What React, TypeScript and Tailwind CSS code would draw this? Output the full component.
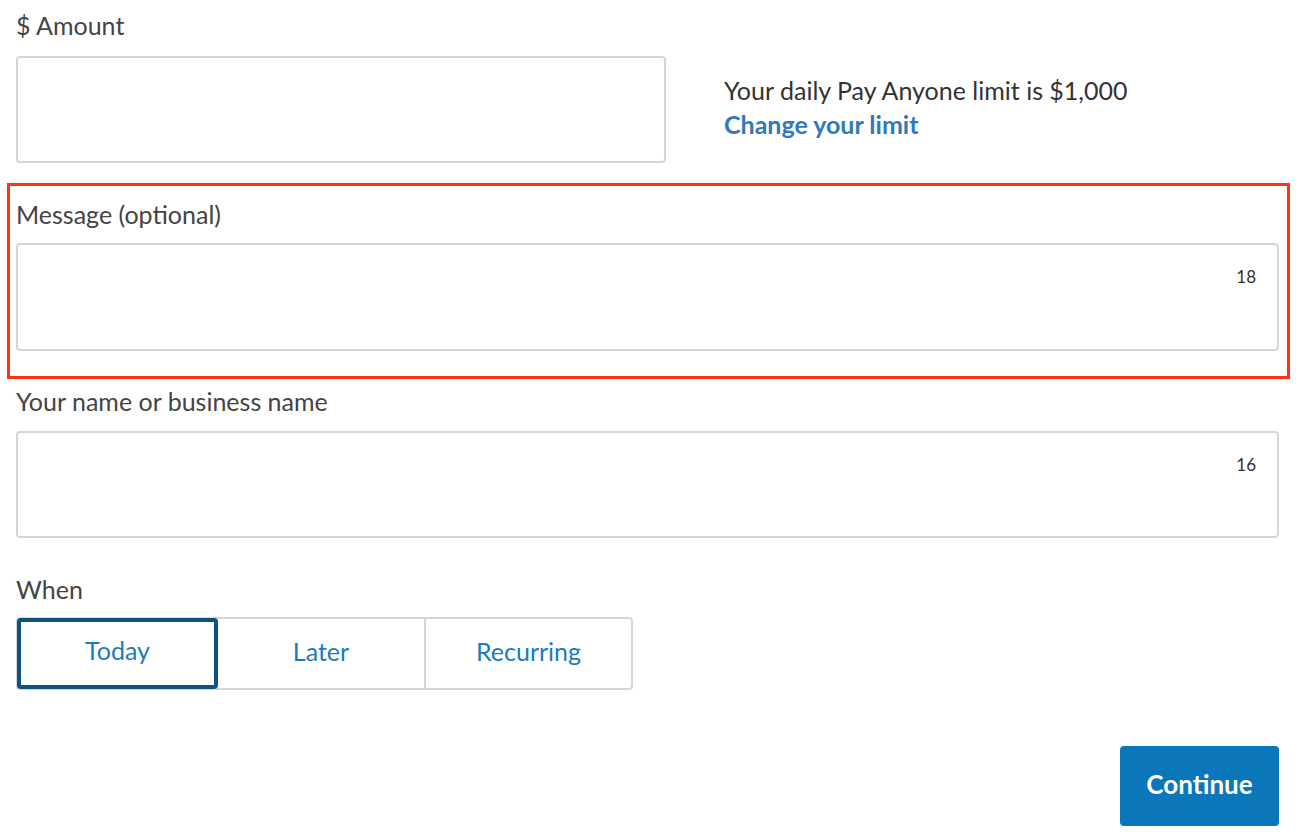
export default function App() {
    const font = { fontFamily: "Lato, 'Open Sans', sans-serif" };
    return (
        <div className="min-h-screen bg-white text-[#444]" style={font}>
            <div className="w-[1263px] ml-4 pt-[9px]">
                {/* Amount */}
                <label className="block h-8 leading-8 text-[25px]">$ Amount</label>
                <div className="mt-[15px] flex items-center">
                    <input
                        type="text"
                        className="w-[650px] h-[107px] rounded border-2 border-[#d6d6d6] bg-white outline-none"
                    />
                    <div className="ml-[58px] text-[25px] leading-[34px] -mt-[5px]">
                        <p className="text-[#333]">Your daily Pay Anyone limit is $1,000</p>
                        <a href="#" className="block font-bold text-[#3079bd]">Change your limit</a>
                    </div>
                </div>

                {/* Message (highlighted) */}
                <div className="mt-[20px] -ml-[9px] -mr-[11px] border-[3px] border-[#ff3316] pl-[6px] pr-[8px] pt-[12px] pb-[25px]">
                    <label className="block h-8 leading-8 text-[25px]">Message (optional)</label>
                    <div className="relative mt-[13px]">
                        <input
                            type="text"
                            className="w-full h-[108px] rounded border-2 border-[#d6d6d6] bg-white outline-none"
                        />
                        <span className="absolute right-[23px] top-[21px] text-[17px] text-[#333]">18</span>
                    </div>
                </div>

                {/* Name */}
                <label className="block mt-[6px] h-8 leading-8 text-[25px]">Your name or business name</label>
                <div className="relative mt-[14px]">
                    <input
                        type="text"
                        className="w-full h-[107px] rounded border-2 border-[#d6d6d6] bg-white outline-none"
                    />
                    <span className="absolute right-[23px] top-[21px] text-[17px] text-[#333]">16</span>
                </div>

                {/* When */}
                <label className="block mt-[35px] h-8 leading-8 text-[25px]">When</label>
                <div className="mt-[12px] flex w-[617px] h-[73px] rounded border-2 border-[#d6d6d6] text-[25px] text-[#1a7bbf]">
                    <button className="w-[201px] -my-px -ml-px pb-[6px] rounded border-4 border-[#0d5382] bg-white">Today</button>
                    <button className="w-[208px] pb-[4px] border-r-2 border-[#d6d6d6]">Later</button>
                    <button className="flex-1 pb-[4px]">Recurring</button>
                </div>

                {/* Continue */}
                <div className="mt-[56px] flex justify-end">
                    <button className="w-[159px] h-[80px] rounded bg-[#0a77bb] pb-1 text-white font-bold text-[26px]">
                        Continue
                    </button>
                </div>
            </div>
        </div>
    );
}
